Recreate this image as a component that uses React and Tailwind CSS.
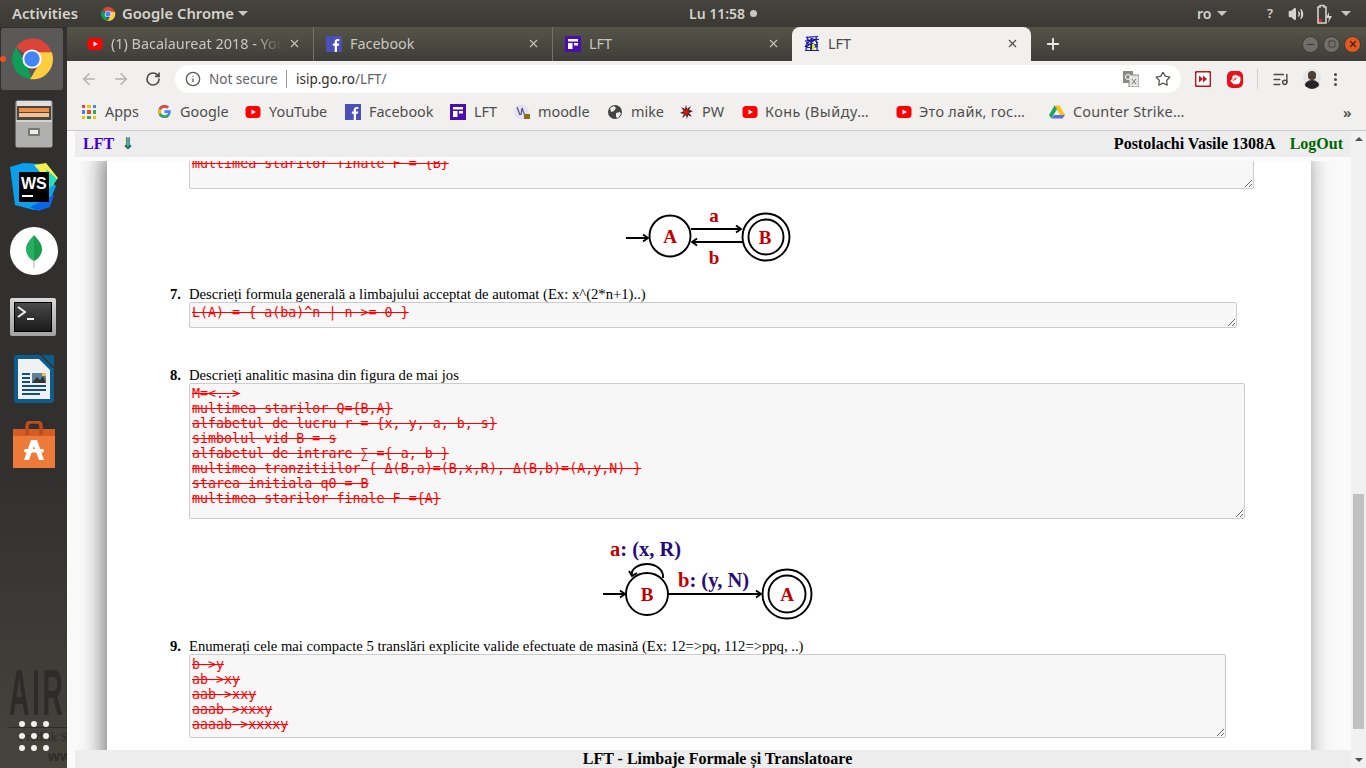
import React from 'react';
import { ArrowLeft, ArrowRight, RotateCw, Info, Star, Plus, X, Volume2, Hand, ListMusic, Minus, Square } from 'lucide-react';

const uiFont = "font-['Noto_Sans',sans-serif]";

const ChromeLogo = ({ className }) => (
  <svg className={className} viewBox="0 0 48 48">
    <path d="M24 24 7.400 11.500A21 21 0 0 1 44.600 17H24z" fill="#db4437" />
    <path d="M7.400 11.500 17 28l7 17A21 21 0 0 1 7.400 11.500z" fill="#0f9d58" />
    <path d="M44.600 17A21 21 0 0 1 22 45l10-17-8-11z" fill="#ffcd40" />
    <circle cx="24" cy="24" r="10" fill="#fff" />
    <circle cx="24" cy="24" r="8" fill="#4285f4" />
  </svg>
);

const YouTubeIcon = ({ className }) => (
  <svg className={className} viewBox="0 0 16 16">
    <rect x="0.500" y="2" width="15" height="12" rx="3.500" fill="#f00" />
    <path d="M6.500 5.500v5L11 8z" fill="#fff" />
  </svg>
);

const FacebookIcon = ({ className }) => (
  <svg className={className} viewBox="0 0 16 16">
    <rect width="16" height="16" fill="#4b50b8" />
    <path d="M11 16V9.800h1.900l.3-2.300H11V6.100c0-.7.2-1.100 1.100-1.100h1.200V3c-.3 0-.9-.1-1.700-.1C9.900 2.900 8.700 3.900 8.700 5.800v1.700H6.800v2.300h1.900V16z" fill="#fff" />
  </svg>
);

const LftIcon = ({ className }) => (
  <svg className={className} viewBox="0 0 16 16">
    <rect width="16" height="16" fill="#4a0db0" />
    <path d="M3 3h10v2.500H3zM3 7h4.500v6H3zM9 7h4v2.500H9z" fill="#fff" />
  </svg>
);

const LftPageIcon = ({ className }) => (
  <svg className={className} viewBox="0 0 17 17" fill="none">
    <path d="M2 2 15 1M1 6l15-2M2 9l13 1M3 13l12-1M1 16l15 0M4 1 2 16M8 1l-1 15M13 1l1 15M3 3l10 9M13 3 3 12M6 1l9 7M1 12l7-9" stroke="#1a1aa0" strokeWidth="1.200" />
    <rect x="8" y="9" width="3" height="6" fill="#f2ee10" />
    <path d="M8 9v6" stroke="#222" strokeWidth="1.200" />
  </svg>
);

const GoogleIcon = ({ className }) => (
  <svg className={className} viewBox="0 0 48 48">
    <path d="M43.600 20H24v8.500h11.300C33.700 33.400 29.300 36.500 24 36.500c-6.900 0-12.500-5.600-12.500-12.500S17.100 11.500 24 11.500c3.100 0 6 1.200 8.200 3l6-6C34.500 5.100 29.500 3 24 3 12.400 3 3 12.400 3 24s9.400 21 21 21 20-8.400 20-21c0-1.400-.1-2.700-.4-4z" fill="#4285f4" />
    <path d="M6 14.100l7 5.100C14.800 14.700 19 11.500 24 11.500c3.100 0 6 1.200 8.200 3l6-6C34.500 5.100 29.500 3 24 3 16 3 9.500 7.500 6 14.100z" fill="#ea4335" />
    <path d="M24 45c5.400 0 10.300-2 14-5.400l-6.500-5.500c-2 1.500-4.600 2.400-7.500 2.400-5.300 0-9.700-3.100-11.300-8L5.800 33.800C9.300 40.500 16.100 45 24 45z" fill="#34a853" />
    <path d="M12.700 28.500c-.8-2.800-.8-6.300.3-9.300L6 14.100C3 20 3 28 5.800 33.800z" fill="#fbbc05" />
  </svg>
);

const AppsGrid = () => (
  <div className="grid grid-cols-3 gap-[2px] w-[14px] h-[14px]">
    <span className="bg-[#ea4335]" />
    <span className="bg-[#fbbc05]" />
    <span className="bg-[#4285f4]" />
    <span className="bg-[#4285f4]" />
    <span className="bg-[#ea4335]" />
    <span className="bg-[#34a853]" />
    <span className="bg-[#fbbc05]" />
    <span className="bg-[#34a853]" />
    <span className="bg-[#fbbc05]" />
  </div>
);

const MoodleIcon = ({ className }) => (
  <svg className={className} viewBox="0 0 16 16">
    <circle cx="7.500" cy="8" r="7.500" fill="#e4e2ee" />
    <path d="M3 3l3 8M7 11l1-7 3 8" stroke="#50508c" strokeWidth="1.200" fill="none" />
    <rect x="10" y="10" width="6" height="5" fill="#8a6a1c" />
  </svg>
);

const GlobeIcon = ({ className }) => (
  <svg className={className} viewBox="0 0 16 16">
    <circle cx="8" cy="8" r="7" fill="#444" />
    <path d="M3 4l4-2 2 2-2 3-3 1zM9 9l4-1 1 2-3 4-2-1z" fill="#eee" />
  </svg>
);

const PwIcon = ({ className }) => (
  <svg className={className} viewBox="0 0 16 16">
    <path d="M8 1l1 4 4-3-2 4 4 1-4 2 3 4-4-2-1 4-1-4-4 3 2-4-4-1 4-2-3-4 4 2z" fill="#3a1414" />
    <circle cx="8" cy="8" r="3" fill="#c81818" />
  </svg>
);

const DriveIcon = ({ className }) => (
  <svg className={className} viewBox="0 0 16 16">
    <path d="M5.500 1.500h5L16 11h-5z" fill="#f5c518" />
    <path d="M5.500 1.500 0 11l2.500 3.500L8 5z" fill="#1fa463" />
    <path d="M2.500 14.500h11L16 11H5.200z" fill="#5a6fd8" />
  </svg>
);

const FileManagerIcon = () => (
  <svg className="w-[38px] h-[48px]" viewBox="0 0 38 48">
    <rect x="0.500" y="0.500" width="37" height="47" rx="2" fill="#a8a8a6" />
    <rect x="2" y="1" width="34" height="5" fill="#dededc" />
    <rect x="2" y="6" width="34" height="14" fill="#4c463c" />
    <rect x="4" y="8" width="30" height="4" fill="#ee9148" />
    <rect x="4" y="13" width="30" height="4" fill="#f3c193" />
    <rect x="1" y="20" width="36" height="27" fill="#b0b0ae" />
    <rect x="1" y="20" width="36" height="2" fill="#d4d4d2" />
    <rect x="13" y="28" width="12" height="8" rx="1" fill="#77776f" />
    <rect x="15" y="30" width="8" height="4" fill="#ededeb" />
  </svg>
);

const WebStormIcon = () => (
  <svg className="w-[48px] h-[48px]" viewBox="0 0 48 48">
    <path d="M0 4 13 0l20 1-2 8 15 14-8 20-14 4L5 42z" fill="#0aa0ee" />
    <path d="M24 2 36 0l12 15-6 8z" fill="#f4ee4e" />
    <path d="M36 6l11 10-8 10z" fill="#1de0c8" />
    <path d="M20 44l24-12-4 12-12 4z" fill="#0866e8" />
    <rect x="9" y="9" width="30" height="30" fill="#000" />
    <rect x="12" y="32" width="11" height="2" fill="#fff" />
    <text x="11" y="26" fontSize="16" fontWeight="700" fill="#fff" fontFamily="Liberation Sans, sans-serif">WS</text>
  </svg>
);

const MongoIcon = () => (
  <div className="w-[48px] h-[48px] rounded-full bg-white flex items-center justify-center">
    <svg className="w-[16px] h-[33px]" viewBox="0 0 16 33">
      <path d="M8 0c3 4 8 8 8 14 0 6-4 10-7.500 12L8 26z" fill="#179a4c" />
      <path d="M8 0C5 4 0 8 0 14c0 6 4 10 7.500 12l.5 0z" fill="#27ae60" />
      <rect x="7.400" y="25" width="1.200" height="8" fill="#b8c4ba" />
    </svg>
  </div>
);

const TerminalIcon = () => (
  <div className="w-[46px] h-[38px] -ml-[1px] rounded-[2px] bg-gradient-to-b from-[#d8d8d8] to-[#a2a2a2] p-[4px]">
    <div className="w-full h-full bg-gradient-to-b from-[#4a4a4a] to-[#1a1a1a] border border-black">
      <svg className="w-full h-full" viewBox="0 0 36 28" fill="none" stroke="#eee" strokeWidth="2">
        <path d="M3 4l7 5-7 5" />
        <path d="M12 16h7" />
      </svg>
    </div>
  </div>
);

const WriterIcon = () => (
  <svg className="w-[40px] h-[48px]" viewBox="0 0 40 48">
    <path d="M2 0h24l14 14v31a3 3 0 0 1-3 3H3a3 3 0 0 1-3-3V2a2 2 0 0 1 2-2z" fill="#0e5c8c" />
    <path d="M28 0h12v12z" fill="#0e5c8c" />
    <path d="M4 4h21l11 11v29H4z" fill="#eef0f2" />
    <path d="M8 19h8M8 23h8M8 27h8M8 31h24M8 35h24M8 39h18" stroke="#124f80" strokeWidth="2" />
    <rect x="18" y="18" width="14" height="10" fill="#5f7f9e" />
    <path d="M18 28l5-6 3 3 3-4 3 7z" fill="#333" />
    <rect x="28" y="18" width="4" height="3" fill="#e6c64a" />
  </svg>
);

const StoreIcon = () => (
  <svg className="w-[42px] h-[47px]" viewBox="0 0 42 47">
    <path d="M0 8h42v39H0z" fill="#ee7a3a" />
    <path d="M0 8h42v7H0z" fill="#d65c24" />
    <path d="M14 14V5q0-4 4-4h6q4 0 4 4v9" fill="none" stroke="#b94d1e" strokeWidth="3.500" />
    <path d="M18 19h6l7 20h-5l-5-14-5 14h-5z" fill="#fff" />
    <rect x="11" y="28" width="20" height="3.500" rx="1.700" fill="#fff" />
  </svg>
);

const Dock = () => (
  <div className="relative w-[67px] shrink-0 overflow-hidden bg-gradient-to-b from-[#32302e] from-60% to-[#45443d]">
    {/* wallpaper showing through the launcher */}
    <div className="absolute left-[9px] top-[633px] text-[#2d2c28] whitespace-nowrap">
      <div className="font-['Liberation_Sans',sans-serif] font-bold text-[64px] leading-[66px] tracking-[6px] scale-x-[0.44] origin-left">AIRS</div>
      <div className="h-[1px] w-[60px] bg-[#2d2c28] mt-[1px]" />
      <div className="font-['Liberation_Serif',serif] text-[13px] leading-[16px] ml-[10px] mt-[1px]">Fredrik S</div>
      <div className="font-['Liberation_Sans',sans-serif] font-bold text-[15px] leading-[16px] ml-[39px] mt-[3px]">www</div>
    </div>
    <div className="relative flex flex-col items-center h-full">
      <div className="relative w-[62px] h-[62px] ml-[-3px] mt-[1px] rounded-[3px] bg-[#5a5957] flex items-center justify-center">
        <ChromeLogo className="w-[46px] h-[46px]" />
        <span className="absolute left-[-1px] top-[28px] w-[6px] h-[6px] rounded-full bg-[#e95420]" />
      </div>
      <div className="mt-[10px]"><FileManagerIcon /></div>
      <div className="mt-[15px]"><WebStormIcon /></div>
      <div className="mt-[16px]"><MongoIcon /></div>
      <div className="mt-[23px]"><TerminalIcon /></div>
      <div className="mt-[19px]"><WriterIcon /></div>
      <div className="mt-[18px]"><StoreIcon /></div>
      <div className="mt-auto mb-[17px] grid grid-cols-3 gap-x-[6px] gap-y-[6px]">
        {Array.from({ length: 9 }).map((_, i) => (
          <span key={i} className="w-[6px] h-[6px] rounded-full bg-[#f2f2f0]" />
        ))}
      </div>
    </div>
  </div>
);

const TopBar = () => (
  <div className={`h-[27px] shrink-0 flex items-center bg-gradient-to-b from-[#45443e] to-[#3a3934] text-[#d5d3cb] text-[14.800px] font-semibold ${uiFont}`}>
    <span className="ml-[12px] w-[88px]">Activities</span>
    <ChromeLogo className="w-[16px] h-[16px]" />
    <span className="ml-[6px] w-[110px] whitespace-nowrap">Google Chrome</span>
    <span className="ml-[6px] w-0 h-0 border-x-[5px] border-x-transparent border-t-[5px] border-t-[#c8c6be]" />
    <span className="ml-[441px] w-[58px] whitespace-nowrap text-[14px]">Lu 11:58</span>
    <span className="ml-[3px] w-[7px] h-[7px] rounded-full bg-[#c8c6be]" />
    <span className="ml-[440px] w-[14px] text-[14px]">ro</span>
    <span className="ml-[6px] w-0 h-0 border-x-[5px] border-x-transparent border-t-[5px] border-t-[#c8c6be]" />
    <span className="ml-[40px] w-[8px] text-[13px]">?</span>
    <Volume2 className="ml-[13px] w-[16px] h-[16px]" strokeWidth={2} fill="#d5d3cb" />
    <svg className="ml-[12px] w-[16px] h-[20px]" viewBox="0 0 16 20" fill="none">
      <path d="M4 3V1.500h4V3h2v16H2V3z" stroke="#d5d3cb" strokeWidth="1.600" />
      <rect x="3" y="15" width="3" height="3" fill="#d8262c" />
      <path d="M13 8l-3 6h3l-1 5 4-7h-3z" fill="#d5d3cb" />
    </svg>
    <span className="ml-[9px] w-0 h-0 border-x-[5px] border-x-transparent border-t-[5px] border-t-[#c8c6be]" />
  </div>
);

const Tab = ({ icon, title, active, fade, divider }) => (
  <div
    className={`w-[239px] h-full flex items-center shrink-0 pl-[12px] pr-[12px] pb-[1px] text-[14.400px] ${
      active ? 'bg-[#f1f0ee] text-[#4a4a48] rounded-t-[8px]' : 'text-[#c8c7c0]'
    } ${divider ? 'border-r border-[#74736a]' : ''}`}
  >
    <span className="w-[16px] h-[16px] flex items-center justify-center shrink-0">{icon}</span>
    <span
      className={`ml-[8px] flex-1 overflow-hidden whitespace-nowrap ${
        fade ? '[mask-image:linear-gradient(90deg,#000_85%,transparent)]' : ''
      }`}
    >
      {title}
    </span>
    <X className="ml-[6px] w-[13px] h-[13px] shrink-0" strokeWidth={2} />
  </div>
);

const TabStrip = () => (
  <div className={`h-[34px] shrink-0 flex items-stretch pl-[8px] bg-gradient-to-b from-[#565549] to-[#3e3d38] ${uiFont}`}>
    <Tab icon={<YouTubeIcon className="w-[16px] h-[16px]" />} title="(1) Bacalaureat 2018 - YouTube" fade divider />
    <Tab icon={<FacebookIcon className="w-[16px] h-[16px]" />} title="Facebook" divider />
    <Tab icon={<LftIcon className="w-[16px] h-[16px]" />} title="LFT" />
    <Tab icon={<LftPageIcon className="w-[17px] h-[17px]" />} title="LFT" active />
    <Plus className="ml-[13px] self-center w-[18px] h-[18px] text-[#e8e7e0]" strokeWidth={2.500} />
    <div className="ml-auto mr-[5px] self-center flex gap-[4px]">
      <span className="w-[17px] h-[17px] rounded-full bg-[#70706a] border border-[#3a3934] flex items-center justify-center">
        <Minus className="w-[11px] h-[11px] text-[#2e2d29]" />
      </span>
      <span className="w-[17px] h-[17px] rounded-full bg-[#70706a] border border-[#3a3934] flex items-center justify-center">
        <Square className="w-[8px] h-[8px] text-[#2e2d29]" />
      </span>
      <span className="w-[17px] h-[17px] rounded-full bg-[#e2591f] border border-[#3a3934] flex items-center justify-center">
        <X className="w-[10px] h-[10px] text-[#4a1c08]" strokeWidth={3} />
      </span>
    </div>
  </div>
);

const Toolbar = () => (
  <div className={`h-[36px] shrink-0 flex items-center bg-[#f1f0ee] ${uiFont}`}>
    <ArrowLeft className="ml-[13px] w-[18px] h-[18px] text-[#b4b3b1]" strokeWidth={2} />
    <ArrowRight className="ml-[14px] w-[18px] h-[18px] text-[#b4b3b1]" strokeWidth={2} />
    <RotateCw className="ml-[15px] w-[16px] h-[16px] text-[#4a4a48]" strokeWidth={2.400} />
    <div className="ml-[14px] w-[1006px] h-[28px] rounded-full bg-white flex items-center">
      <Info className="ml-[10px] w-[16px] h-[16px] text-[#5a5a58]" strokeWidth={2} />
      <span className="ml-[8px] w-[69px] whitespace-nowrap text-[#5f6368] text-[13.500px]">Not secure</span>
      <span className="ml-[8px] w-[1px] h-[18px] bg-[#9a9a98]" />
      <span className="ml-[9px] text-[#5f6368] text-[13.500px]">
        <span className="text-[#2e2e2e]">isip.go.ro</span>/LFT/
      </span>
      <svg className="ml-auto w-[16px] h-[16px]" viewBox="0 0 16 16">
        <rect x="0" y="0" width="10" height="12" fill="#8a8a88" />
        <rect x="6" y="4" width="10" height="12" fill="#e4e4e2" stroke="#8a8a88" />
        <circle cx="5" cy="6" r="2.500" fill="none" stroke="#fff" />
        <path d="M9 8l4 5M13 8l-4 5" stroke="#777" />
      </svg>
      <Star className="ml-[16px] mr-[10px] w-[16px] h-[16px] text-[#5a5a58]" strokeWidth={2} />
    </div>
    <svg className="ml-[14px] w-[16px] h-[16px]" viewBox="0 0 16 16">
      <rect x="0.500" y="0.500" width="15" height="15" rx="2" fill="#fff" stroke="#b01c20" strokeWidth="1.800" />
      <path d="M4 4.500v7l4-3.500zM8 4.500v7l4-3.500z" fill="#c8161c" />
    </svg>
    <div className="ml-[16px] w-[16px] h-[17px] rounded-[5px] bg-[#e8111a] flex items-center justify-center">
      <Hand className="w-[11px] h-[11px] text-white" fill="#fff" strokeWidth={1.500} />
    </div>
    <span className="ml-[14px] w-[1px] h-[20px] bg-[#d0cfcd]" />
    <ListMusic className="ml-[14px] w-[17px] h-[17px] text-[#4a4a48]" strokeWidth={2} />
    <div className="ml-[14px] w-[18px] h-[20px] rounded-full bg-[#e6e6e4] overflow-hidden flex flex-col items-center">
      <span className="mt-[2px] w-[8px] h-[9px] rounded-full bg-[#4a4038]" />
      <span className="w-[16px] h-[9px] rounded-t-full bg-[#26262a]" />
    </div>
    <div className="ml-[13px] flex flex-col gap-[2px]">
      <span className="w-[3px] h-[3px] rounded-full bg-[#4a4a48]" />
      <span className="w-[3px] h-[3px] rounded-full bg-[#4a4a48]" />
      <span className="w-[3px] h-[3px] rounded-full bg-[#4a4a48]" />
    </div>
  </div>
);

const yt = <YouTubeIcon className="w-[16px] h-[16px]" />;

const bookmarks = [
  { w: 'w-[75px]', icon: <AppsGrid />, label: 'Apps', gap: 'gap-[9px]' },
  { w: 'w-[88px]', icon: <GoogleIcon className="w-[15px] h-[15px]" />, label: 'Google', gap: 'gap-[8px]' },
  { w: 'w-[100px]', icon: yt, label: 'YouTube', gap: 'gap-[8px]' },
  { w: 'w-[105px]', icon: <FacebookIcon className="w-[16px] h-[16px]" />, label: 'Facebook', gap: 'gap-[8px]' },
  { w: 'w-[64px]', icon: <LftIcon className="w-[16px] h-[16px]" />, label: 'LFT', gap: 'gap-[8px]' },
  { w: 'w-[93px]', icon: <MoodleIcon className="w-[16px] h-[16px]" />, label: 'moodle', gap: 'gap-[8px]' },
  { w: 'w-[71px]', icon: <GlobeIcon className="w-[16px] h-[16px]" />, label: 'mike', gap: 'gap-[8px]' },
  { w: 'w-[64px]', icon: <PwIcon className="w-[16px] h-[16px]" />, label: 'PW', gap: 'gap-[8px]' },
  { w: 'w-[154px]', icon: yt, label: 'Конь (Выйду…', gap: 'gap-[7px] tracking-[0.5px]' },
  { w: 'w-[153px]', icon: yt, label: 'Это лайк, гос…', gap: 'gap-[7px] tracking-[0.3px]' },
  { w: 'w-[294px]', icon: <DriveIcon className="w-[16px] h-[16px]" />, label: 'Counter Strike…', gap: 'gap-[8px] tracking-[0.2px]' },
];

const BookmarksBar = () => (
  <div className={`h-[33px] shrink-0 flex items-center pl-[15px] pb-[3px] bg-[#f1f0ee] text-[14.400px] text-[#4e4e4c] ${uiFont}`}>
    {bookmarks.map((b) => (
      <div key={b.label} className={`${b.w} ${b.gap} flex items-center shrink-0 whitespace-nowrap`}>
        {b.icon}
        <span>{b.label}</span>
      </div>
    ))}
    <span className="text-[15px] font-semibold">»</span>
  </div>
);

const answerClass =
  "block resize bg-[#f7f7f7] border border-[#cccccc] rounded-[2px] px-[2px] py-[2px] font-['DejaVu_Sans_Mono',monospace] text-[13.333px] leading-[15px] text-[#ff0000] line-through outline-none overflow-hidden";

const Question = ({ n, children }) => (
  <div className="flex text-[14.667px] leading-[16px] text-black -ml-[30px] whitespace-nowrap">
    <span className="w-[22px] mr-[8px] text-right font-bold">{n}.</span>
    <span>{children}</span>
  </div>
);

const DiagramAB = () => (
  <div className="-ml-[82px] mt-[9px] flex justify-center">
    <svg className="w-[200px] h-[75px]" viewBox="609 198 200 75" fontFamily="Liberation Serif, serif" fontWeight="700">
      <g fill="none" stroke="#000" strokeWidth="1.900">
        <circle cx="670" cy="236" r="20.500" />
        <circle cx="766" cy="237" r="23.500" />
        <circle cx="766" cy="237" r="17.500" />
        <path d="M626 238h22M643 234.500l5 3.500-5 3.500" />
        <path d="M691 229h50M736 225.500l5 3.500-5 3.500" />
        <path d="M743 242h-51M697 238.500l-5 3.500 5 3.500" />
      </g>
      <g fill="#c00000" textAnchor="middle">
        <text x="670" y="243" fontSize="19">A</text>
        <text x="765" y="244" fontSize="19">B</text>
        <text x="714" y="222" fontSize="19">a</text>
        <text x="714" y="264" fontSize="19">b</text>
      </g>
    </svg>
  </div>
);

const DiagramBA = () => (
  <div className="-ml-[82px] mt-[16px] flex justify-center">
    <svg className="w-[240px] h-[90px]" viewBox="589 535 240 90" fontFamily="Liberation Serif, serif" fontWeight="700">
      <g fill="none" stroke="#000" strokeWidth="1.900">
        <circle cx="647" cy="594" r="21" />
        <circle cx="787" cy="594" r="24.500" />
        <circle cx="787" cy="594" r="18.500" />
        <path d="M603 594h22M620 590.500l5 3.500-5 3.500" />
        <path d="M668 594h93M756 590.500l5 3.500-5 3.500" />
        <path d="M632 576c-2-8 8-12 15-12 9 0 17 6 16 14" />
        <path d="M629 571l3 5 5-3" />
      </g>
      <g fill="#c00000" textAnchor="middle">
        <text x="647" y="601" fontSize="19">B</text>
        <text x="787" y="601" fontSize="19">A</text>
      </g>
      <text x="610" y="556" fontSize="20.500" fill="#280a78">
        <tspan fill="#c00000">a</tspan>: (x, R)
      </text>
      <text x="678" y="587" fontSize="20.500" fill="#280a78">
        <tspan fill="#c00000">b</tspan>: (y, N)
      </text>
    </svg>
  </div>
);

const Page = () => (
  <div className="flex-1 min-h-0 bg-[#fafafa] flex flex-col border-t border-[#cccccc]">
    <div className="h-[26px] shrink-0 ml-[8px] bg-[#ededed] flex items-center pl-[8px] pr-[8px] font-['Liberation_Serif',serif] font-bold text-[16px]">
      <span className="text-[#4400cc]">LFT</span>
      <span className="ml-[7px] text-[#006a5a] text-[16px] font-['DejaVu_Sans',sans-serif] font-bold">⇓</span>
      <span className="ml-auto text-black">Postolachi Vasile 1308A</span>
      <span className="ml-[14px] text-[#006600]">LogOut</span>
    </div>
    <div className="flex-1 min-h-0 mt-[4px] overflow-hidden px-[40px]">
      <div className="h-[700px] bg-white shadow-[-4px_0_22px_#777777] pl-[82px] font-['Liberation_Serif',serif]">
        <textarea
          readOnly
          className={`${answerClass} w-[1065px] h-[36px] -mt-[8px]`}
          defaultValue="multimea starilor finale F = {B}"
        />
        <DiagramAB />
        <div className="mt-[13px]">
          <Question n={7}>Descrieți formula generală a limbajului acceptat de automat (Ex: x^(2*n+1)..)</Question>
        </div>
        <textarea readOnly className={`${answerClass} w-[1048px] h-[26px]`} defaultValue="L(A) = { a(ba)^n | n >= 0 }" />
        <div className="mt-[39px]">
          <Question n={8}>Descrieți analitic masina din figura de mai jos</Question>
        </div>
        <textarea
          readOnly
          className={`${answerClass} w-[1056px] h-[136px]`}
          defaultValue={`M=<..>
multimea starilor Q={B,A}
alfabetul de lucru r = {x, y, a, b, s}
simbolul vid B = s
alfabetul de intrare ∑ ={ a, b }
multimea tranzitiilor { Δ(B,a)=(B,x,R), Δ(B,b)=(A,y,N) }
starea initiala q0 = B
multimea starilor finale F ={A}`}
        />
        <DiagramBA />
        <div className="mt-[13px]">
          <Question n={9}>Enumerați cele mai compacte 5 translări explicite valide efectuate de masină (Ex: 12=&gt;pq, 112=&gt;ppq, ..)</Question>
        </div>
        <textarea
          readOnly
          className={`${answerClass} w-[1037px] h-[84px]`}
          defaultValue={`b->y
ab->xy
aab->xxy
aaab->xxxy
aaaab->xxxxy`}
        />
      </div>
    </div>
    <div className="h-[18px] shrink-0 ml-[8px] pl-[9px] bg-[#ededed] flex items-center justify-center font-['Liberation_Serif',serif] font-bold text-[16px] text-black">
      LFT - Limbaje Formale și Translatoare
    </div>
  </div>
);

const Scrollbar = () => (
  <div className="w-[15px] shrink-0 bg-[#f1f1f1] border-t border-[#cccccc] flex flex-col items-center">
    <span className="mt-[6px] w-0 h-0 border-x-[4px] border-x-transparent border-b-[4px] border-b-[#505050]" />
    <span className="w-[11px] h-[235px] mt-[353px] bg-[#c1c1c1]" />
    <span className="mt-auto mb-[6px] w-0 h-0 border-x-[4px] border-x-transparent border-t-[4px] border-t-[#505050]" />
  </div>
);

const App = () => (
  <div className="w-[1366px] h-[768px] overflow-hidden flex flex-col bg-[#3c3b37]">
    <TopBar />
    <div className="flex-1 min-h-0 flex">
      <Dock />
      <div className="flex-1 min-w-0 flex flex-col">
        <TabStrip />
        <Toolbar />
        <BookmarksBar />
        <div className="flex-1 min-h-0 flex">
          <Page />
          <Scrollbar />
        </div>
      </div>
    </div>
  </div>
);

export default App;
